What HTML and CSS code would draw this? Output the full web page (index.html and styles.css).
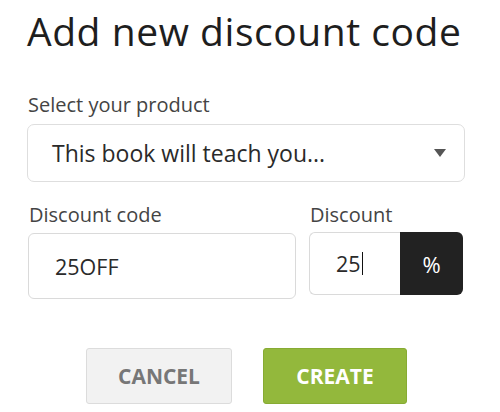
FILE: index.html
```html
<!DOCTYPE html>
<html>
<head>
<meta charset="utf-8">
<link rel="stylesheet" href="styles.css">
</head>
<body>
<div class="dialog">
  <h1 class="title">Add new discount code</h1>
  <div class="field product-field">
    <label class="label">Select your product</label>
    <div class="select">
      <span class="select-text">This book will teach you...</span>
      <span class="caret"></span>
    </div>
  </div>
  <div class="row">
    <div class="field code-field">
      <label class="label">Discount code</label>
      <div class="input code-input">25OFF</div>
    </div>
    <div class="field amount-field">
      <label class="label">Discount</label>
      <div class="amount-group">
        <div class="input amount-input">25<span class="cursor"></span></div>
        <div class="unit">%</div>
      </div>
    </div>
  </div>
  <div class="actions">
    <button class="btn btn-cancel">CANCEL</button>
    <button class="btn btn-create">CREATE</button>
  </div>
</div>
</body>
</html>
```

FILE: styles.css
```css
html, body {
  margin: 0;
  padding: 0;
  background: #ffffff;
}
body {
  width: 500px;
  height: 412px;
  overflow: hidden;
  font-family: "Open Sans", "Liberation Sans", sans-serif;
  color: #222;
}
.dialog {
  width: 438px;
  margin-left: 27px;
  display: flex;
  flex-direction: column;
}
.title {
  margin: 5px 0 0 0;
  font-size: 39px;
  font-weight: 400;
  line-height: 52px;
  color: #1e1e1e;
  letter-spacing: 0.55px;
}
.field {
  display: flex;
  flex-direction: column;
}
.label {
  font-size: 20px;
  line-height: 24px;
  color: #444;
  margin-left: 1px;
}
.product-field {
  margin-top: 36px;
}
.select {
  margin-top: 7px;
  height: 56px;
  border: 1px solid #dedede;
  border-radius: 7px;
  display: flex;
  align-items: center;
  justify-content: space-between;
  padding: 0 18px 0 24px;
}
.select-text {
  font-size: 23px;
  color: #2a2a2a;
}
.caret {
  width: 0;
  height: 0;
  border-left: 6.5px solid transparent;
  border-right: 6.5px solid transparent;
  border-top: 8px solid #555;
}
.row {
  display: flex;
  margin-top: 21px;
}
.code-field {
  width: 268px;
  margin-left: 1px;
}
.amount-field {
  margin-left: 13px;
  width: 154px;
}
.input {
  border: 1px solid #dadada;
  border-radius: 6px;
  display: flex;
  align-items: center;
  font-size: 21.5px;
  color: #2a2a2a;
}
.code-input {
  margin-top: 6px;
  height: 64px;
  padding-left: 26px;
}
.amount-group {
  margin-top: 5px;
  display: flex;
  height: 63px;
}
.amount-input {
  flex: 1;
  border-right: none;
  border-radius: 6px 0 0 6px;
  padding-left: 26px;
}
.cursor {
  display: inline-block;
  width: 1px;
  height: 23px;
  background: #111;
  margin-left: 1px;
}
.unit {
  width: 63px;
  background: #222;
  color: #fff;
  border-radius: 0 6px 6px 0;
  display: flex;
  align-items: center;
  justify-content: center;
  font-size: 22px;
}
.actions {
  display: flex;
  gap: 31px;
  margin-top: 49px;
  margin-left: 59px;
}
.btn {
  height: 56px;
  border-radius: 3px;
  font-family: "Open Sans", "Liberation Sans", sans-serif;
  font-weight: 700;
  font-size: 21px;
  padding: 0;
}
.btn-cancel {
  width: 146px;
  background: #f2f2f2;
  border: 1px solid #dcdcdc;
  color: #777;
}
.btn-create {
  width: 144px;
  background: #93b83c;
  border: 1px solid #87ab33;
  color: #fff;
}
```
